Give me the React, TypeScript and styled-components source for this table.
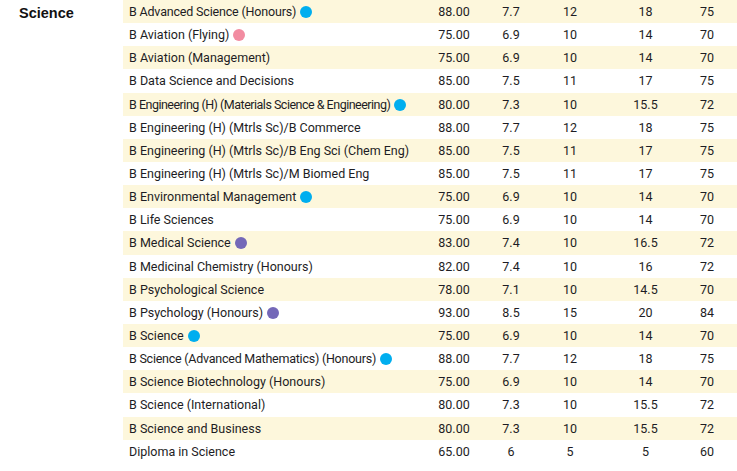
import React, { FC } from 'react';
import styled, { createGlobalStyle } from 'styled-components';

const GlobalStyle = createGlobalStyle`
  html, body {
    margin: 0;
    padding: 0;
    background: #fff;
  }
`;

const Page = styled.div`
  display: flex;
  align-items: flex-start;
  width: 737px;
`;

const Faculty = styled.h3`
  width: 104px;
  flex: none;
  margin: 0;
  padding: 3px 0 0 19px;
  font-family: 'Liberation Sans', Arial, sans-serif;
  font-size: 14.5px;
  line-height: 20px;
  font-weight: 700;
  color: #111;
`;

const Table = styled.table`
  flex: none;
  width: 614px;
  border-collapse: collapse;
  table-layout: fixed;
  font-family: Roboto, 'Liberation Sans', sans-serif;
  font-size: 12.5px;
  color: #1d1d24;
`;

const Row = styled.tr<{ $striped: boolean }>`
  height: 23.15px;
  background-color: ${({ $striped }) => ($striped ? '#fdf7dc' : '#fff')};
`;

const Name = styled.td<{ $tight?: number }>`
  padding: 0 0 0 6px;
  white-space: nowrap;
  vertical-align: middle;
  letter-spacing: ${({ $tight }) => ($tight ? `-${$tight}px` : 'normal')};
`;

const Num = styled.td<{ $w: number; $pr?: number }>`
  box-sizing: border-box;
  width: ${({ $w }) => $w}px;
  padding: 0 ${({ $pr }) => $pr || 0}px 0 0;
  text-align: center;
  vertical-align: middle;
`;

const Dot = styled.span<{ $c: string }>`
  display: inline-block;
  width: 12px;
  height: 12px;
  border-radius: 50%;
  margin-left: 4px;
  vertical-align: -2px;
  background-color: ${({ $c }) => $c};
`;

const colours: Record<string, string> = {
  blue: '#00aeef',
  pink: '#f28ca1',
  purple: '#7468b8',
};

interface Course {
  name: string;
  dot?: 'blue' | 'pink' | 'purple';
  tight?: number;
  v: [string, string, string, string, string];
}

const courses: Course[] = [
  { name: 'B Advanced Science (Honours)', dot: 'blue', tight: 0.18, v: ['88.00', '7.7', '12', '18', '75'] },
  { name: 'B Aviation (Flying)', dot: 'pink', v: ['75.00', '6.9', '10', '14', '70'] },
  { name: 'B Aviation (Management)', v: ['75.00', '6.9', '10', '14', '70'] },
  { name: 'B Data Science and Decisions', v: ['85.00', '7.5', '11', '17', '75'] },
  { name: 'B Engineering (H) (Materials Science & Engineering)', dot: 'blue', tight: 0.5, v: ['80.00', '7.3', '10', '15.5', '72'] },
  { name: 'B Engineering (H) (Mtrls Sc)/B Commerce', v: ['88.00', '7.7', '12', '18', '75'] },
  { name: 'B Engineering (H) (Mtrls Sc)/B Eng Sci (Chem Eng)', v: ['85.00', '7.5', '11', '17', '75'] },
  { name: 'B Engineering (H) (Mtrls Sc)/M Biomed Eng', v: ['85.00', '7.5', '11', '17', '75'] },
  { name: 'B Environmental Management', dot: 'blue', v: ['75.00', '6.9', '10', '14', '70'] },
  { name: 'B Life Sciences', v: ['75.00', '6.9', '10', '14', '70'] },
  { name: 'B Medical Science', dot: 'purple', v: ['83.00', '7.4', '10', '16.5', '72'] },
  { name: 'B Medicinal Chemistry (Honours)', v: ['82.00', '7.4', '10', '16', '72'] },
  { name: 'B Psychological Science', v: ['78.00', '7.1', '10', '14.5', '70'] },
  { name: 'B Psychology (Honours)', dot: 'purple', v: ['93.00', '8.5', '15', '20', '84'] },
  { name: 'B Science', dot: 'blue', v: ['75.00', '6.9', '10', '14', '70'] },
  { name: 'B Science (Advanced Mathematics) (Honours)', dot: 'blue', tight: 0.24, v: ['88.00', '7.7', '12', '18', '75'] },
  { name: 'B Science Biotechnology (Honours)', v: ['75.00', '6.9', '10', '14', '70'] },
  { name: 'B Science (International)', v: ['80.00', '7.3', '10', '15.5', '72'] },
  { name: 'B Science and Business', v: ['80.00', '7.3', '10', '15.5', '72'] },
  { name: 'Diploma in Science', v: ['65.00', '6', '5', '5', '60'] },
];

// widths of the five score columns; the name column takes the rest (301px)
const widths = [60, 54, 64, 87, 48];

const App: FC = () => (
  <>
    <GlobalStyle />
    <Page>
      <Faculty>Science</Faculty>
      <Table>
        <tbody>
          {courses.map((c, i) => (
            <Row key={i} $striped={i % 2 === 0}>
              <Name $tight={c.tight}>
                {c.name}
                {c.dot && <Dot $c={colours[c.dot]} />}
              </Name>
              {c.v.map((val, j) => (
                <Num key={j} $w={widths[j]} $pr={j === 4 ? 12 : 0}>
                  {val}
                </Num>
              ))}
            </Row>
          ))}
        </tbody>
      </Table>
    </Page>
  </>
);

export default App;
